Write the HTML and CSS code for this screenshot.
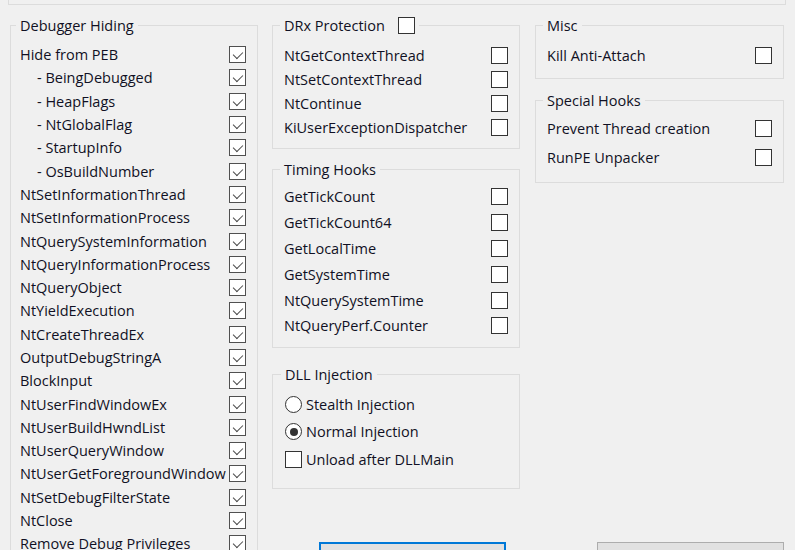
FILE: index.html
```html
<!DOCTYPE html>
<html>
<head>
<meta charset="utf-8">
<link rel="stylesheet" href="styles.css">
</head>
<body>
<div class="topframe"></div>
<div class="main">
  <div class="col col1">
    <fieldset class="group g-debug">
      <legend>Debugger Hiding</legend>
      <div class="row"><span>Hide from PEB</span><span class="cb on"></span></div>
      <div class="row sub"><span>- BeingDebugged</span><span class="cb on"></span></div>
      <div class="row sub"><span>- HeapFlags</span><span class="cb on"></span></div>
      <div class="row sub"><span>- NtGlobalFlag</span><span class="cb on"></span></div>
      <div class="row sub"><span>- StartupInfo</span><span class="cb on"></span></div>
      <div class="row sub"><span>- OsBuildNumber</span><span class="cb on"></span></div>
      <div class="row"><span>NtSetInformationThread</span><span class="cb on"></span></div>
      <div class="row"><span>NtSetInformationProcess</span><span class="cb on"></span></div>
      <div class="row"><span>NtQuerySystemInformation</span><span class="cb on"></span></div>
      <div class="row"><span>NtQueryInformationProcess</span><span class="cb on"></span></div>
      <div class="row"><span>NtQueryObject</span><span class="cb on"></span></div>
      <div class="row"><span>NtYieldExecution</span><span class="cb on"></span></div>
      <div class="row"><span>NtCreateThreadEx</span><span class="cb on"></span></div>
      <div class="row"><span>OutputDebugStringA</span><span class="cb on"></span></div>
      <div class="row"><span>BlockInput</span><span class="cb on"></span></div>
      <div class="row"><span>NtUserFindWindowEx</span><span class="cb on"></span></div>
      <div class="row"><span>NtUserBuildHwndList</span><span class="cb on"></span></div>
      <div class="row"><span>NtUserQueryWindow</span><span class="cb on"></span></div>
      <div class="row"><span>NtUserGetForegroundWindow</span><span class="cb on"></span></div>
      <div class="row"><span>NtSetDebugFilterState</span><span class="cb on"></span></div>
      <div class="row"><span>NtClose</span><span class="cb on"></span></div>
      <div class="row"><span>Remove Debug Privileges</span><span class="cb on"></span></div>
    </fieldset>
  </div>
  <div class="right">
    <div class="cols">
      <div class="col col2">
        <fieldset class="group g-drx">
          <legend><span>DRx Protection</span><span class="cb legend-cb"></span></legend>
          <div class="row"><span>NtGetContextThread</span><span class="cb"></span></div>
          <div class="row"><span>NtSetContextThread</span><span class="cb"></span></div>
          <div class="row"><span>NtContinue</span><span class="cb"></span></div>
          <div class="row"><span>KiUserExceptionDispatcher</span><span class="cb"></span></div>
        </fieldset>
        <fieldset class="group g-timing">
          <legend>Timing Hooks</legend>
          <div class="row"><span>GetTickCount</span><span class="cb"></span></div>
          <div class="row"><span>GetTickCount64</span><span class="cb"></span></div>
          <div class="row"><span>GetLocalTime</span><span class="cb"></span></div>
          <div class="row"><span>GetSystemTime</span><span class="cb"></span></div>
          <div class="row"><span>NtQuerySystemTime</span><span class="cb"></span></div>
          <div class="row"><span>NtQueryPerf.Counter</span><span class="cb"></span></div>
        </fieldset>
        <fieldset class="group g-dll">
          <legend>DLL Injection</legend>
          <div class="row opt"><span class="radio"></span><span>Stealth Injection</span></div>
          <div class="row opt"><span class="radio on"></span><span>Normal Injection</span></div>
          <div class="row opt"><span class="cb"></span><span>Unload after DLLMain</span></div>
        </fieldset>
      </div>
      <div class="col col3">
        <fieldset class="group g-misc">
          <legend>Misc</legend>
          <div class="row"><span>Kill Anti-Attach</span><span class="cb"></span></div>
        </fieldset>
        <fieldset class="group g-special">
          <legend>Special Hooks</legend>
          <div class="row"><span>Prevent Thread creation</span><span class="cb"></span></div>
          <div class="row"><span>RunPE Unpacker</span><span class="cb"></span></div>
        </fieldset>
      </div>
    </div>
    <div class="buttons">
      <div class="btn-cell"><button class="btn btn-default"></button></div>
      <div class="btn-cell"><button class="btn btn-second"></button></div>
    </div>
  </div>
</div>
</body>
</html>
```
FILE: styles.css
```css
html, body {
  margin: 0;
  padding: 0;
  background: #f0f0f0;
}
body {
  width: 795px;
  height: 550px;
  overflow: hidden;
  font-family: "Open Sans", "Noto Sans", "DejaVu Sans", sans-serif;
  font-size: 14.5px;
  color: #101024;
}
.topframe {
  margin-left: 8px;
  width: 776px;
  height: 4px;
  border: 1px solid #dcdcdc;
  border-top: none;
}
.main {
  display: flex;
  gap: 14px;
  padding-left: 10px;
  margin-top: 11.5px;
}
.col {
  display: flex;
  flex-direction: column;
}
.col1 { width: 248px; }
.right {
  width: 512px;
  display: flex;
  flex-direction: column;
}
.cols {
  display: flex;
  gap: 15px;
  align-items: flex-start;
}
.col2 { width: 248px; }
.col3 { width: 249px; }

.group {
  box-sizing: border-box;
  width: 100%;
  margin: 0;
  min-width: 0;
  border: 1px solid #dcdcdc;
  padding: 0 11px 0 11px;
}
.group legend {
  line-height: 17px;
  padding: 0 4px;
  margin-left: -4px;
  display: flex;
  align-items: center;
}
.row {
  display: flex;
  justify-content: space-between;
  align-items: center;
  height: 24px;
  white-space: nowrap;
}
.row.sub span:first-child { padding-left: 17px; }

.g-debug { padding: 9.5px 11px 0 9px; }
.g-debug .row { height: 23.3px; }

.g-drx { padding-top: 9.5px; padding-bottom: 9px; }
.g-timing { margin-top: 11.5px; padding-top: 6.6px; padding-bottom: 8px; }
.g-timing .row { height: 25.8px; }
.g-dll { margin-top: 18px; padding: 7.8px 11px 15px 12px; }
.g-dll .row { height: 27.5px; justify-content: flex-start; gap: 4px; }

.g-misc { padding-top: 9.5px; padding-bottom: 11px; }
.g-special { margin-top: 12.5px; padding-top: 6px; padding-bottom: 10px; }
.g-special .row { height: 28.5px; }

.cb {
  box-sizing: border-box;
  width: 17px;
  height: 17px;
  border: 1.5px solid #333;
  background: #fff;
  flex: none;
  position: relative;
}
.cb.on {
  border-color: #505050;
}
.cb.on::after {
  content: "";
  position: absolute;
  left: 3px;
  top: 1px;
  width: 8px;
  height: 4.5px;
  border-left: 1.5px solid #4a4a4a;
  border-bottom: 1.5px solid #4a4a4a;
  transform: translate(0.3px, 3px) rotate(-45deg);
  transform-origin: center;
}
.legend-cb { margin-left: 13px; }

.radio {
  box-sizing: border-box;
  width: 17px;
  height: 17px;
  border: 1.5px solid #333;
  border-radius: 50%;
  background: #fff;
  flex: none;
  display: flex;
  align-items: center;
  justify-content: center;
}
.radio.on::after {
  content: "";
  width: 8px;
  height: 8px;
  border-radius: 50%;
  background: #333;
}

.buttons {
  display: flex;
  gap: 15px;
  margin-top: 53px;
}
.btn-cell { width: 248px; }
.btn-cell:last-child { width: 249px; }
.btn {
  box-sizing: border-box;
  width: 187px;
  height: 30px;
  background: #e1e1e1;
  font: inherit;
  color: #101024;
}
.btn-default {
  margin-left: 47px;
  border: 2px solid #0078d7;
}
.btn-second {
  margin-left: 62px;
  border: 1px solid #adadad;
}
```
